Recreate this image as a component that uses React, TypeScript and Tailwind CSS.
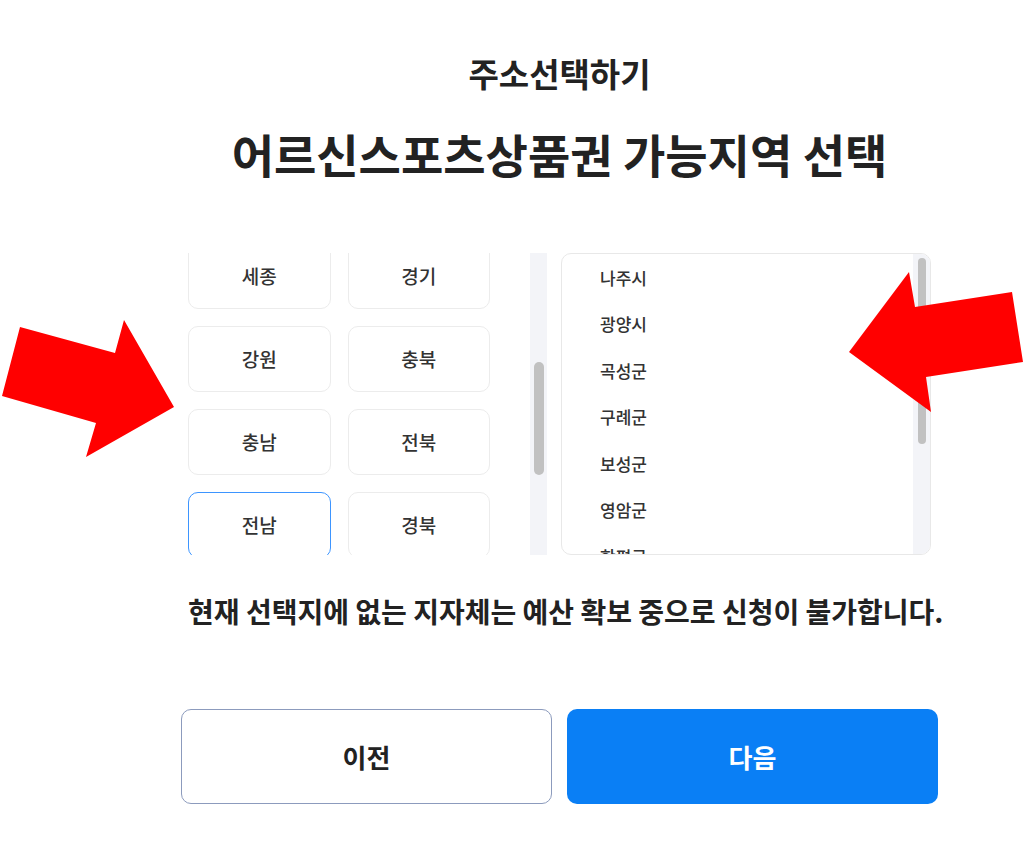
import React, { useLayoutEffect, useRef, useState } from 'react';

const REGIONS = [
  '서울', '부산', '대구', '인천', '광주', '대전', '세종', '경기', '강원',
  '충북', '충남', '전북', '전남', '경북', '경남', '제주', '울산',
];

const CITIES = [
  '나주시', '광양시', '곡성군', '구례군', '보성군', '영암군', '함평군', '영광군', '장성군', '신안군',
];

// native scrollbars are hidden; draw the track ourselves
function ScrollArea({
  initialTop,
  thumbPad,
  children,
}: {
  initialTop: number;
  thumbPad: string;
  children: React.ReactNode;
}) {
  const ref = useRef<HTMLDivElement>(null);
  const [thumb, setThumb] = useState({ top: 4, height: 0 });

  const update = () => {
    const el = ref.current;
    if (!el) return;
    const usable = el.clientHeight - 8;
    const height = Math.max(20, (usable * el.clientHeight) / el.scrollHeight);
    const range = el.scrollHeight - el.clientHeight;
    const top = 4 + (range > 0 ? ((usable - height) * el.scrollTop) / range : 0);
    setThumb({ top, height });
  };

  useLayoutEffect(() => {
    if (ref.current) ref.current.scrollTop = initialTop;
    update();
  }, []);

  return (
    <div className="flex h-full">
      <div
        ref={ref}
        onScroll={update}
        className="h-full min-w-0 flex-1 overflow-y-auto [scrollbar-width:none] [&::-webkit-scrollbar]:hidden"
      >
        {children}
      </div>
      <div className={`h-full w-[17px] shrink-0 bg-[#f3f4f8] ${thumbPad}`}>
        <div
          className="w-full rounded-full bg-[#c1c1c1]"
          style={{ marginTop: thumb.top, height: thumb.height }}
        />
      </div>
    </div>
  );
}

function Arrows() {
  return (
    <svg
      className="pointer-events-none absolute left-0 top-0"
      width="1024"
      height="848"
      viewBox="0 0 1024 848"
    >
      <polygon fill="#ff0000" points="20,327 115,353 124,320 174,407 86,457 96,423 2,396" />
      <polygon fill="#ff0000" points="909,272 915,307 1012,292 1023,362 926,377 931,412 849,352" />
    </svg>
  );
}

export default function App() {
  return (
    <div className="relative h-[848px] w-[1024px] overflow-hidden bg-white font-['Noto_Sans_CJK_KR','Noto_Sans',sans-serif] text-[#222]">
      <div className="ml-[181px] flex w-[757px] flex-col">
        <h2 className="mt-[53px] text-center text-[33px] font-bold leading-[40px]">주소선택하기</h2>
        <h1 className="mt-[32px] whitespace-nowrap text-center text-[46px] font-bold leading-[56px]">
          어르신스포츠상품권 가능지역 선택
        </h1>

        <div className="mt-[72px] flex h-[302px] gap-[14px]">
          <div className="h-full w-[366px]">
            <ScrollArea initialTop={281} thumbPad="px-[3.5px]">
              <div className="grid grid-cols-2 gap-[17px] pb-[34px] pl-[7px] pr-[40px] pt-[22px]">
                {REGIONS.map((r) => (
                  <button
                    key={r}
                    className={`flex h-[66px] items-center justify-center rounded-[10px] border bg-white text-[19px] font-medium text-[#333] ${
                      r === '전남' ? 'border-[#3d95ff]' : 'border-[#ececec]'
                    }`}
                  >
                    {r}
                  </button>
                ))}
              </div>
            </ScrollArea>
          </div>

          <div className="h-full w-[370px] overflow-hidden rounded-[10px] border border-[#e8e8e8]">
            <ScrollArea initialTop={0} thumbPad="px-[4.5px]">
              <div className="pb-[6px]">
                {CITIES.map((c) => (
                  <div
                    key={c}
                    className="flex h-[46.5px] items-center pl-[38px] text-[17px] font-medium text-[#333]"
                  >
                    {c}
                  </div>
                ))}
              </div>
            </ScrollArea>
          </div>
        </div>

        <p className="mt-[38px] whitespace-nowrap pl-[7px] text-[28px] font-bold leading-[36px]">
          현재 선택지에 없는 지자체는 예산 확보 중으로 신청이 불가합니다.
        </p>

        <div className="mt-[80px] flex gap-[15px]">
          <button className="flex h-[95px] w-[371px] items-center justify-center rounded-[10px] border border-[#8c9bbd] bg-white text-[26px] font-bold text-[#222]">
            이전
          </button>
          <button className="flex h-[95px] w-[371px] items-center justify-center rounded-[10px] bg-[#0a7ff5] text-[26px] font-bold text-white">
            다음
          </button>
        </div>
      </div>
      <Arrows />
    </div>
  );
}
